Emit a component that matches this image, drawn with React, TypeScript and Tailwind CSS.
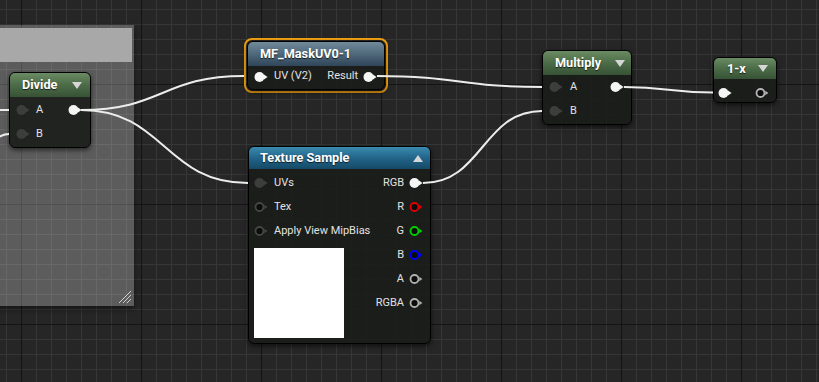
import React from "react";

const font = "font-[family-name:Roboto,'Noto_Sans',sans-serif]";

type PinKind = "solid" | "dim" | "ring";

function Pin({ kind, color = "#a8a8a8" }: { kind: PinKind; color?: string }) {
  if (kind === "ring") {
    return (
      <svg width="14" height="12" viewBox="0 0 14 12" className="shrink-0">
        <circle cx="5.5" cy="6" r="4" fill="#0c0c0c" stroke={color} strokeWidth="1.8" />
        <path d="M10.3 3.7 L13.4 6 L10.3 8.3 Z" fill={color} />
      </svg>
    );
  }
  const c = kind === "solid" ? "#f5f5f5" : "#3d3d3d";
  return (
    <svg width="14" height="12" viewBox="0 0 14 12" className="shrink-0">
      <circle cx="5.5" cy="6" r="5" fill={c} />
      <path d="M10 3.4 L13.6 6 L10 8.6 Z" fill={c} />
    </svg>
  );
}

function Tri({ up = false }: { up?: boolean }) {
  return (
    <svg width="10" height="7" viewBox="0 0 10 7" className="shrink-0">
      <path d={up ? "M0 7 H10 L5 0 Z" : "M0 0 H10 L5 7 Z"} fill="#d6d6d6" />
    </svg>
  );
}

const nodeBody =
  "rounded-[6px] border border-black bg-[#1b1d1b]/90 shadow-[0_2px_5px_rgba(0,0,0,0.6)]";
const green = "bg-linear-to-b from-[#6a8b63] via-[#4c6c48] to-[#375235]";
const label = "whitespace-nowrap text-[11px] text-[#e2e2e2]";
const title =
  "whitespace-nowrap text-[12.7px] font-bold text-white [text-shadow:0_1px_1px_rgba(0,0,0,0.7)]";

function Wires() {
  const w = (x1: number, y1: number, x2: number, y2: number) => {
    const t = Math.abs(x2 - x1) * 0.5;
    return `M${x1} ${y1} C${x1 + t} ${y1} ${x2 - t} ${y2} ${x2} ${y2}`;
  };
  const paths = [
    w(-5, 110, 9, 110),
    w(-45, 188, 9, 134),
    w(81, 110, 244, 76),
    w(81, 110, 248, 183),
    w(377, 76, 542, 87),
    w(423, 183, 542, 111),
    w(624, 87, 713, 92.5),
  ];
  return (
    <svg className="pointer-events-none absolute left-0 top-0" width="819" height="382">
      {paths.map((d, i) => (
        <path key={i} d={d} fill="none" stroke="#ececec" strokeWidth="2" />
      ))}
    </svg>
  );
}

function CommentBox() {
  return (
    <div className="absolute left-[-12px] top-[25px] flex h-[281px] w-[146px] flex-col bg-white/25 pt-[3px] pr-[2px] shadow-[0_3px_6px_rgba(0,0,0,0.45)]">
      <div className="h-[34px] bg-[#a8a8a8]" />
      <div className="flex-1" />
      <svg width="14" height="14" viewBox="0 0 14 14" className="mb-[2px] self-end">
        <path d="M1 13 L13 1 M5 13 L13 5 M9 13 L13 9" stroke="#cfcfcf" strokeWidth="1" />
      </svg>
    </div>
  );
}

function Divide() {
  return (
    <div className={`absolute left-[9px] top-[72px] w-[82px] ${nodeBody}`}>
      <div className={`flex h-[24px] items-center justify-between rounded-t-[5px] ${green} pl-[12px] pr-[8px]`}>
        <span className={title}>Divide</span>
        <Tri />
      </div>
      <div className="pt-[1px] pb-[1px]">
        <div className="flex h-6 items-center justify-between pl-[6px] pr-[8px]">
          <div className="flex items-center gap-[6px]">
            <Pin kind="dim" />
            <span className={label}>A</span>
          </div>
          <Pin kind="solid" />
        </div>
        <div className="flex h-6 items-center gap-[6px] pl-[6px]">
          <Pin kind="dim" />
          <span className={label}>B</span>
        </div>
      </div>
    </div>
  );
}

function MaskUV() {
  return (
    <div className="absolute left-[244px] top-[38px] w-[144px] rounded-[8px] border-2 border-[#f0a010] p-[1px]">
      <div className={nodeBody}>
        <div className="flex h-[24px] items-center rounded-t-[5px] bg-linear-to-b from-[#728b9b] via-[#4f687a] to-[#30465a] pl-[12px]">
          <span className={title}>MF_MaskUV0-1</span>
        </div>
        <div className="flex h-[21px] items-center justify-between pl-[6px] pr-[7px]">
          <div className="flex items-center gap-[6px]">
            <Pin kind="solid" />
            <span className={label}>UV (V2)</span>
          </div>
          <div className="flex items-center gap-[5px]">
            <span className={label}>Result</span>
            <Pin kind="solid" />
          </div>
        </div>
        <div className="h-[2px]" />
      </div>
    </div>
  );
}

function Multiply() {
  return (
    <div className={`absolute left-[542px] top-[50px] w-[90px] ${nodeBody}`}>
      <div className={`flex h-[24px] items-center justify-between rounded-t-[5px] ${green} pl-[12px] pr-[6px]`}>
        <span className={title}>Multiply</span>
        <Tri />
      </div>
      <div className="pb-[1px]">
        <div className="flex h-6 items-center justify-between pl-[6px] pr-[7px]">
          <div className="flex items-center gap-[7px]">
            <Pin kind="dim" />
            <span className={label}>A</span>
          </div>
          <Pin kind="solid" />
        </div>
        <div className="flex h-6 items-center gap-[7px] pl-[6px]">
          <Pin kind="dim" />
          <span className={label}>B</span>
        </div>
      </div>
    </div>
  );
}

function OneMinus() {
  return (
    <div className={`absolute left-[713px] top-[57px] w-[64px] ${nodeBody}`}>
      <div className={`flex h-[21px] items-center justify-between rounded-t-[5px] ${green} pl-[13px] pr-[8px]`}>
        <span className={title}>1-x</span>
        <Tri />
      </div>
      <div className="flex h-[23px] items-center justify-between pt-[4px] pl-[4px] pr-[7px]">
        <Pin kind="solid" />
        <Pin kind="ring" color="#b4b4b4" />
      </div>
    </div>
  );
}

function TextureSample() {
  const inputs = ["UVs", "Tex", "Apply View MipBias"];
  const outputs: { name: string; kind: PinKind; color?: string }[] = [
    { name: "RGB", kind: "solid" },
    { name: "R", kind: "ring", color: "#e00000" },
    { name: "G", kind: "ring", color: "#00d200" },
    { name: "B", kind: "ring", color: "#0000ff" },
    { name: "A", kind: "ring", color: "#b0b0b0" },
    { name: "RGBA", kind: "ring", color: "#b0b0b0" },
  ];
  return (
    <div className={`absolute left-[248px] top-[146px] w-[183px] ${nodeBody}`}>
      <div className="flex h-[22px] items-center justify-between rounded-t-[5px] bg-linear-to-b from-[#3a8ab0] via-[#22658a] to-[#154a67] pl-[11px] pr-[7px]">
        <span className={title}>Texture Sample</span>
        <Tri up />
      </div>
      <div className="flex justify-between">
        <div className="pl-[5px] pt-[2px] pb-[5px]">
          {inputs.map((n, i) => (
            <div key={n} className="flex h-6 items-center gap-[6px]">
              <Pin kind={i === 0 ? "dim" : "ring"} color="#454545" />
              <span className={label}>{n}</span>
            </div>
          ))}
          <div className="mt-[5px] h-[90px] w-[90px] bg-white" />
        </div>
        <div className="pr-[7px] pt-[2px]">
          {outputs.map((o) => (
            <div key={o.name} className="flex h-6 items-center justify-end gap-[5px]">
              <span className={label}>{o.name}</span>
              <Pin kind={o.kind} color={o.color} />
            </div>
          ))}
        </div>
      </div>
    </div>
  );
}

export default function App() {
  return (
    <div
      className={`relative h-[382px] w-[819px] overflow-hidden bg-[#262626] ${font} bg-[linear-gradient(to_right,#141414_1px,transparent_1px),linear-gradient(to_bottom,#141414_1px,transparent_1px),linear-gradient(to_right,#363636_1px,transparent_1px),linear-gradient(to_bottom,#363636_1px,transparent_1px)] bg-[size:120px_120px,120px_120px,15px_15px,15px_15px] bg-[position:21px_84px]`}
    >
      <CommentBox />
      <Divide />
      <MaskUV />
      <Multiply />
      <OneMinus />
      <TextureSample />
      <Wires />
    </div>
  );
}
